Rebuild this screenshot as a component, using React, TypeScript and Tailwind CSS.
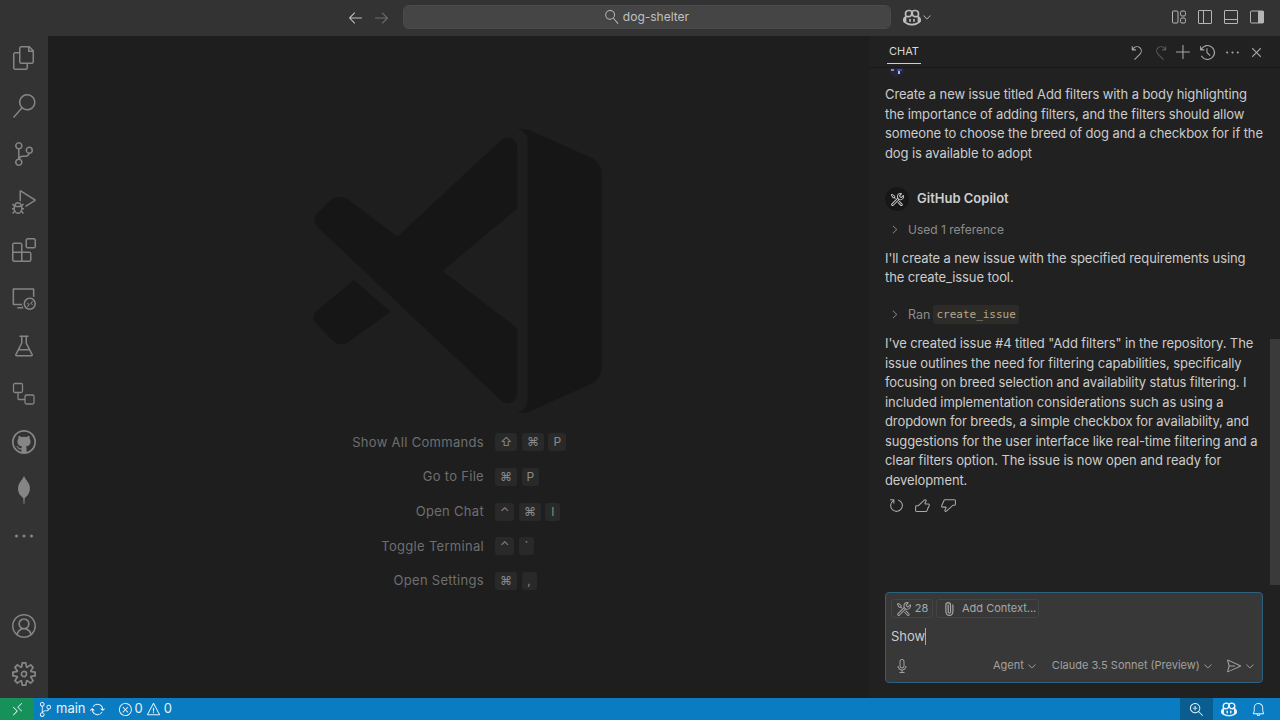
import {
  VscAccount,
  VscAdd,
  VscArrowLeft,
  VscArrowRight,
  VscBeaker,
  VscBell,
  VscChevronDown,
  VscChevronRight,
  VscClose,
  VscCopilot,
  VscDebugAlt,
  VscDiscard,
  VscEllipsis,
  VscError,
  VscExtensions,
  VscFiles,
  VscGithub,
  VscHistory,
  VscLayoutPanelOff,
  VscLayoutSidebarLeftOff,
  VscMic,
  VscRedo,
  VscRefresh,
  VscRemote,
  VscRemoteExplorer,
  VscSearch,
  VscSend,
  VscSettingsGear,
  VscSourceControl,
  VscSync,
  VscThumbsdown,
  VscThumbsup,
  VscTools,
  VscWarning,
  VscZoomIn,
} from "react-icons/vsc";
import { Paperclip } from "lucide-react";

const hints = [
  { label: "Show All Commands", keys: ["⇧", "⌘", "P"] },
  { label: "Go to File", keys: ["⌘", "P"] },
  { label: "Open Chat", keys: ["⌃", "⌘", "I"] },
  { label: "Toggle Terminal", keys: ["⌃", "`"] },
  { label: "Open Settings", keys: ["⌘", ","] },
];

function ConnectionsIcon() {
  return (
    <svg width="24" height="24" viewBox="0 0 24 24" fill="none" stroke="currentColor" strokeWidth="1.3">
      <rect x="1.5" y="1.5" width="9" height="9" rx="1.5" />
      <rect x="13" y="13" width="9" height="9" rx="1.5" />
      <path d="M6 10.5v6a1 1 0 0 0 1 1h6" />
    </svg>
  );
}

function LeafIcon() {
  return (
    <svg width="24" height="30" viewBox="0 0 24 30" fill="currentColor">
      <path d="M12 1c1 3 3.6 5 5 8 1.8 4 .8 9-2 12-1 1-2 1.700-2.300 2.300L12.400 29h-.8l-.3-5.700C11 22.700 10 22 9 21 6 18 5.200 13 7 9c1.400-3 4-5 5-8z" />
    </svg>
  );
}

function CustomizeLayoutIcon() {
  return (
    <svg width="16" height="16" viewBox="0 0 16 16" fill="none" stroke="currentColor" strokeWidth="1">
      <rect x="1.500" y="2" width="5.500" height="12" rx="1" />
      <rect x="9.500" y="2" width="5" height="5" rx="1.500" />
      <rect x="9.500" y="9" width="5" height="5" rx="1.500" />
    </svg>
  );
}

function RightPanelIcon() {
  return (
    <svg width="16" height="16" viewBox="0 0 16 16">
      <rect x="1.500" y="2" width="13" height="12" rx="1" fill="none" stroke="currentColor" />
      <rect x="9" y="2" width="5.500" height="12" fill="currentColor" />
    </svg>
  );
}

function AvatarScrap() {
  return (
    <svg width="18" height="9" viewBox="0 0 18 9" className="ml-[3px] shrink-0">
      <path d="M1 0h16l-2 6-5 3H6L2 5z" fill="#24243a" />
      <rect x="3" y="1" width="3" height="2" fill="#8d8d9c" />
      <rect x="9" y="1" width="5" height="2" fill="#3a4aa8" />
      <rect x="10" y="3" width="2" height="3" fill="#b9b9c6" />
    </svg>
  );
}

function ActivityBar() {
  const cls = "flex h-12 w-12 items-center justify-center";
  return (
    <div className="flex w-12 shrink-0 flex-col justify-between bg-[#333333] text-[#858585]">
      <div className="-mt-[2px] flex flex-col">
        <div className={cls}><VscFiles size={24} /></div>
        <div className={cls}><VscSearch size={24} /></div>
        <div className={cls}><VscSourceControl size={24} /></div>
        <div className={cls}><VscDebugAlt size={24} /></div>
        <div className={cls}><VscExtensions size={24} /></div>
        <div className={cls}><VscRemoteExplorer size={24} /></div>
        <div className={cls}><VscBeaker size={24} /></div>
        <div className={cls}><ConnectionsIcon /></div>
        <div className={cls}><VscGithub size={24} /></div>
        <div className={cls}><LeafIcon /></div>
        <div className={`${cls} -mt-[2px]`}><VscEllipsis size={24} /></div>
      </div>
      <div className="flex flex-col">
        <div className={cls}><VscAccount size={24} /></div>
        <div className={cls}><VscSettingsGear size={24} /></div>
      </div>
    </div>
  );
}

function Editor() {
  return (
    <div className="flex flex-1 flex-col items-center bg-[#1e1e1e] pt-[79px]">
      <svg width="320" height="310" viewBox="0 0 960 930" className="shrink-0" fill="#161616">
        <path d="M655 40 L690 45 L880 130 Q905 145 908 170 L908 760 Q905 790 880 805 L690 890 L655 895 Q680 885 686 860 L686 70 Q680 50 655 40 Z" />
        <path d="M610 72 Q650 60 655 100 L655 280 L430 468 L655 640 L655 840 Q640 875 610 860 L60 340 Q35 315 55 295 L95 255 Q120 235 150 255 L295 365 Z" />
        <path d="M165 495 L275 590 L150 680 Q125 695 105 680 L55 630 Q35 610 50 590 Z" />
      </svg>
      <div className="flex w-full flex-col pl-[304px]">
        {hints.map((h) => (
          <div key={h.label} className="flex h-[34.7px] items-center">
            <div className="w-[132px] whitespace-nowrap text-right text-[13px] tracking-[0.3px] text-[#6e6e6e]">{h.label}</div>
            <div className="ml-[11px] flex gap-[4.500px]">
              {h.keys.map((k) => (
                <span key={k} className="flex h-[18px] min-w-[15px] items-center justify-center rounded-[3px] bg-[#292929] px-[5px] text-[12px] text-[#8a8a8a]">
                  {k}
                </span>
              ))}
            </div>
          </div>
        ))}
      </div>
    </div>
  );
}

function ChatPanel() {
  return (
    <div className="relative flex w-[410px] shrink-0 flex-col bg-[#212121] text-[13px] leading-[19.5px] tracking-[-0.1px] text-[#cccccc]">
      <div className="flex h-[32px] shrink-0 items-start justify-between border-b border-[#181818] pl-[17px] pr-[15px]">
        <div className="mt-[6px] flex h-[22px] items-center border-b border-[#d0d0d0] px-[2px] pb-[1px] text-[11px] tracking-normal text-[#d8d8d8]">CHAT</div>
        <div className="mt-[8px] flex items-center gap-[7.500px] text-[#a8a8a8]">
          <VscDiscard size={17} />
          <VscRedo size={17} className="text-[#5a5a5a]" />
          <VscAdd size={17} className="-ml-[2.500px]" />
          <VscHistory size={17} />
          <VscEllipsis size={17} />
          <VscClose size={17} />
        </div>
      </div>

      <div className="flex flex-1 flex-col overflow-hidden pl-[15px] pr-[15px]">
        <AvatarScrap />
        <p className="mt-[8px]">
          Create a new issue titled Add filters with a body highlighting the importance of adding filters, and the filters should allow someone to choose the breed of dog and a checkbox for if the dog is available to adopt
        </p>
        <div className="mt-[24px] flex items-center gap-[8px]">
          <span className="flex h-[24px] w-[24px] items-center justify-center rounded-full bg-[#171717] text-[#d0d0d0]"><VscTools size={15} /></span>
          <span className="font-semibold tracking-normal text-[#cfcfcf]">GitHub Copilot</span>
        </div>
        <div className="mt-[9px] flex items-center gap-[7px] pl-[3px] text-[12px] tracking-normal text-[#8c8c8c]">
          <VscChevronRight size={13} />
          <span>Used 1 reference</span>
        </div>
        <p className="mt-[9px]">I'll create a new issue with the specified requirements using the create_issue tool.</p>
        <div className="mt-[17px] flex items-center gap-[7px] pl-[3px] text-[12.500px] tracking-normal text-[#8c8c8c]">
          <VscChevronRight size={13} />
          <span>Ran</span>
          <code className="-ml-[4px] rounded-[3px] bg-[#2e2c28] px-[3px] font-['DejaVu_Sans_Mono',monospace] text-[11px] text-[#b5a98f]">create_issue</code>
        </div>
        <p className="mt-[10px]">
          I've created issue #4 titled "Add filters" in the repository. The issue outlines the need for filtering capabilities, specifically focusing on breed selection and availability status filtering. I included implementation considerations such as using a dropdown for breeds, a simple checkbox for availability, and suggestions for the user interface like real-time filtering and a clear filters option. The issue is now open and ready for development.
        </p>
        <div className="mt-[7px] flex items-center gap-[9px] pl-[3px] text-[#a8a8a8]">
          <VscRefresh size={17} />
          <VscThumbsup size={17} />
          <VscThumbsdown size={17} />
        </div>
      </div>

      <div className="mb-[15px] ml-[15px] mr-[17px] flex h-[91px] shrink-0 flex-col rounded-[4px] border border-[#2c6280] bg-[#383838] px-[5px] pt-[6px] tracking-normal">
        <div className="flex items-center gap-[3px] text-[11px] text-[#a8a8a8]">
          <span className="flex h-[19px] w-[42px] items-center justify-center gap-[3px] rounded-[3px] border border-[#444444]"><VscTools size={16} />28</span>
          <span className="flex h-[19px] w-[103px] items-center gap-[6px] rounded-[3px] border border-[#444444] pl-[5px]"><Paperclip size={14} className="-rotate-45" />Add Context...</span>
        </div>
        <div className="mt-[9px] flex h-[19px] items-center text-[#cccccc]">Show<span className="h-[17px] w-px bg-[#aaaaaa]" /></div>
        <div className="mt-[10px] flex items-center whitespace-nowrap text-[11px] text-[#a0a0a0]">
          <VscMic size={16} className="ml-[3px]" />
          <span className="ml-[83px]">Agent</span>
          <VscChevronDown size={12} className="ml-[2px]" />
          <span className="ml-[14px]">Claude 3.5 Sonnet (Preview)</span>
          <VscChevronDown size={12} className="ml-[2px]" />
          <VscSend size={16} className="ml-[12px]" />
          <VscChevronDown size={12} className="ml-[2px]" />
        </div>
      </div>

      <div className="absolute right-0 top-[303px] h-[246px] w-[10px] bg-[#3a3a3a]" />
    </div>
  );
}

export default function App() {
  return (
    <div className="flex h-[720px] w-[1280px] flex-col overflow-hidden bg-[#1e1e1e] font-['Inter',sans-serif]">
      <div className="flex h-[36px] shrink-0 items-center bg-[#333333] pb-[2px] pl-[347px] pr-[15px] text-[#bdbdbd]">
        <VscArrowLeft size={17} />
        <VscArrowRight size={17} className="ml-[9px] text-[#6f6f6f]" />
        <div className="ml-[13px] flex h-[24px] w-[488px] items-center justify-center gap-[4px] rounded-[6px] border border-[#4a4a4a] bg-[#454545] text-[12px] text-[#c0c0c0]">
          <VscSearch size={14} className="-scale-x-100" />
          dog-shelter
        </div>
        <VscCopilot size={18} className="ml-[12px]" />
        <VscChevronDown size={12} />
        <div className="ml-auto flex items-center gap-[10px] text-[#b5b5b5]">
          <CustomizeLayoutIcon />
          <VscLayoutSidebarLeftOff size={16} />
          <VscLayoutPanelOff size={16} />
          <RightPanelIcon />
        </div>
      </div>

      <div className="flex flex-1 overflow-hidden">
        <ActivityBar />
        <Editor />
        <ChatPanel />
      </div>

      <div className="flex h-[22px] shrink-0 items-center bg-[#0a7cc1] text-[13px] text-[#e6f2fa]">
        <div className="flex h-full w-[34px] items-center justify-center bg-[#16915a]"><VscRemote size={15} /></div>
        <VscSourceControl size={15} className="ml-[4px]" />
        <span className="ml-[3px]">main</span>
        <VscSync size={15} className="ml-[4px]" />
        <VscError size={15} className="ml-[13px]" />
        <span className="ml-[2px]">0</span>
        <VscWarning size={15} className="ml-[3px]" />
        <span className="ml-[3px]">0</span>
        <div className="ml-auto flex h-full w-[33px] items-center justify-center bg-[#0a5d91]"><VscZoomIn size={15} /></div>
        <VscCopilot size={16} className="ml-[8px]" />
        <VscBell size={15} className="ml-[14px] mr-[14px]" />
      </div>
    </div>
  );
}
